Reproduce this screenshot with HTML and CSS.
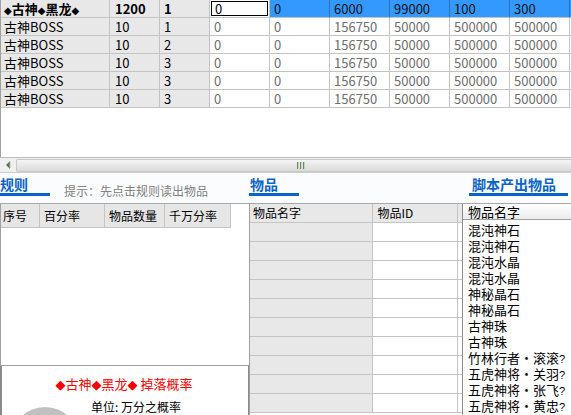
FILE: index.html
```html
<!DOCTYPE html>
<html>
<head>
<meta charset="utf-8">
<link rel="stylesheet" href="styles.css">
</head>
<body>
<div class="top">
  <div class="row sel">
    <div class="c fix c1"><span class="dm">◆</span>古神<span class="dm">◆</span>黑龙<span class="dm">◆</span></div>
    <div class="c fix c2">1200</div>
    <div class="c fix">1</div>
    <div class="c edit"><span class="input">0</span></div>
    <div class="c hl">0</div>
    <div class="c hl">6000</div>
    <div class="c hl">99000</div>
    <div class="c hl">100</div>
    <div class="c hl">300</div>
    <div class="c hl"></div>
  </div>
  <div class="row">
    <div class="c fix c1">古神BOSS</div><div class="c fix c2">10</div><div class="c fix">1</div>
    <div class="c">0</div><div class="c">0</div><div class="c">156750</div><div class="c">50000</div><div class="c">500000</div><div class="c">500000</div><div class="c"></div>
  </div>
  <div class="row">
    <div class="c fix c1">古神BOSS</div><div class="c fix c2">10</div><div class="c fix">2</div>
    <div class="c">0</div><div class="c">0</div><div class="c">156750</div><div class="c">50000</div><div class="c">500000</div><div class="c">500000</div><div class="c"></div>
  </div>
  <div class="row">
    <div class="c fix c1">古神BOSS</div><div class="c fix c2">10</div><div class="c fix">3</div>
    <div class="c">0</div><div class="c">0</div><div class="c">156750</div><div class="c">50000</div><div class="c">500000</div><div class="c">500000</div><div class="c"></div>
  </div>
  <div class="row">
    <div class="c fix c1">古神BOSS</div><div class="c fix c2">10</div><div class="c fix">3</div>
    <div class="c">0</div><div class="c">0</div><div class="c">156750</div><div class="c">50000</div><div class="c">500000</div><div class="c">500000</div><div class="c"></div>
  </div>
  <div class="row">
    <div class="c fix c1">古神BOSS</div><div class="c fix c2">10</div><div class="c fix">3</div>
    <div class="c">0</div><div class="c">0</div><div class="c">156750</div><div class="c">50000</div><div class="c">500000</div><div class="c">500000</div><div class="c"></div>
  </div>
</div>
<div class="hscroll">
  <div class="arrow"><svg width="6" height="8" viewBox="0 0 6 8"><path d="M5 0 L1 4 L5 8 Z" fill="#6a6a6a"/><path d="M5 1 L5 7" stroke="#8fd16a" stroke-width="1"/></svg></div>
  <div class="thumb"><div class="grip"><i></i><i></i><i></i></div></div>
</div>
<div class="tabs">
  <div class="tsec tsec1">
    <div class="tab tab1">规则</div>
    <div class="hint">提示：先点击规则读出物品</div>
  </div>
  <div class="tsec tsec2">
    <div class="tab tab2">物品</div>
  </div>
  <div class="tsec tsec3">
    <div class="tab tab3">脚本产出物品</div>
  </div>
</div>
<div class="panels">
  <div class="left">
    <div class="lup">
      <div class="lhead">
        <div class="h h1">序号</div><div class="h h2">百分率</div><div class="h h3">物品数量</div><div class="h h4">千万分率</div>
      </div>
    </div>
    <div class="ldown">
      <div class="rtitle"><span class="dm2">◆</span>古神<span class="dm2">◆</span>黑龙<span class="dm2">◆</span> 掉落概率</div>
      <div class="chartrow">
        <svg class="pie" width="68" height="68" viewBox="0 0 68 68"><circle cx="34" cy="34" r="34" fill="#c0c0c0"/></svg>
        <div class="unit">单位: 万分之概率</div>
      </div>
    </div>
  </div>
  <div class="mid">
    <div class="mrow mhead"><div class="m m1">物品名字</div><div class="m m2">物品ID</div><div class="m m3"></div></div>
    <div class="mrow"><div class="m m1"></div><div class="m m2"></div><div class="m m3"></div></div>
    <div class="mrow"><div class="m m1"></div><div class="m m2"></div><div class="m m3"></div></div>
    <div class="mrow"><div class="m m1"></div><div class="m m2"></div><div class="m m3"></div></div>
    <div class="mrow"><div class="m m1"></div><div class="m m2"></div><div class="m m3"></div></div>
    <div class="mrow"><div class="m m1"></div><div class="m m2"></div><div class="m m3"></div></div>
    <div class="mrow"><div class="m m1"></div><div class="m m2"></div><div class="m m3"></div></div>
    <div class="mrow"><div class="m m1"></div><div class="m m2"></div><div class="m m3"></div></div>
    <div class="mrow"><div class="m m1"></div><div class="m m2"></div><div class="m m3"></div></div>
    <div class="mrow"><div class="m m1"></div><div class="m m2"></div><div class="m m3"></div></div>
    <div class="mrow"><div class="m m1"></div><div class="m m2"></div><div class="m m3"></div></div>
  </div>
  <div class="right">
    <div class="rhead">物品名字</div>
    <ul class="list">
      <li>混沌神石</li>
      <li>混沌神石</li>
      <li>混沌水晶</li>
      <li>混沌水晶</li>
      <li>神秘晶石</li>
      <li>神秘晶石</li>
      <li>古神珠</li>
      <li>古神珠</li>
      <li>竹林行者・滚滚<span class="q">?</span></li>
      <li>五虎神将・关羽<span class="q">?</span></li>
      <li>五虎神将・张飞<span class="q">?</span></li>
      <li>五虎神将・黄忠<span class="q">?</span></li>
    </ul>
  </div>
</div>
</body>
</html>
```

FILE: styles.css
```css
* { box-sizing: border-box; margin: 0; padding: 0; }
html, body { width: 571px; height: 415px; overflow: hidden; }
body {
  background: #fbfcfe;
  font-family: "Noto Sans CJK SC", "Microsoft YaHei", sans-serif;
  font-size: 13px;
  color: #000;
}

/* top grid */
.top { height: 157px; background: #fff; border-left: 1px solid #a0a0a0; overflow: hidden; }
.row {
  display: grid;
  grid-template-columns: 109px 50px 50px 60px 60px 60px 60px 60px 60px 60px;
  height: 18px;
}
.c {
  border-right: 1px solid #c4c4c4;
  border-bottom: 1px solid #c4c4c4;
  padding-left: 4px;
  line-height: 17px;
  white-space: nowrap;
  overflow: hidden;
  color: #6e6e6e;
}
.fix { background: #e8e8e8; color: #000; }
.c1 { padding-left: 3px; }
.c2 { padding-left: 5px; }
.sel .fix { font-weight: bold; }
.sel .hl { background: #3399ff; color: #111; border-right-color: #2b72c0; }
.dm { font-family: "DejaVu Sans", sans-serif; font-size: 10px; font-weight: bold; }
.edit { padding: 1px 1px 1px 1px; }
.input {
  display: block;
  height: 15px;
  border: 1px solid #000;
  background: #fff;
  color: #000;
  padding-left: 3px;
  line-height: 13px;
}

/* horizontal scrollbar */
.hscroll {
  height: 16px;
  border-top: 1px solid #bcbcbc;
  border-bottom: 1px solid #cfcfcf;
  background: #f0f0f0;
  display: flex;
  align-items: center;
}
.arrow { width: 16px; height: 14px; display: flex; align-items: center; justify-content: center; }
.thumb {
  flex: 1;
  height: 13px;
  border: 1px solid #c8c8c8;
  border-right: none;
  border-radius: 2px 0 0 2px;
  background: linear-gradient(#f5f5f5, #dadada);
  display: flex;
  align-items: center;
  padding-left: 280px;
}
.grip { display: flex; gap: 2px; }
.grip i { display: block; width: 1px; height: 7px; background: #7a7a7a; box-shadow: 1px 0 0 #b8e3a0; }

/* tabs */
.tabs { height: 31px; border-bottom: 1px solid #a8a8a8; display: flex; align-items: flex-start; }
.tsec { display: flex; align-items: flex-start; }
.tsec1 { width: 249px; }
.tsec2 { width: 220px; }
.tsec3 { width: 102px; }
.tab {
  margin-top: 3px;
  height: 20px;
  border-bottom: 3px solid #0a64c8;
  color: #0a64c8;
  font-weight: bold;
  font-size: 14px;
  line-height: 17px;
  white-space: nowrap;
}
.tab1 { width: 50px; }
.tab2 { width: 50px; padding-left: 1px; }
.tab3 { width: 99px; padding-left: 3px; }
.hint { margin-left: 14px; margin-top: 11px; font-size: 12px; line-height: 14px; color: #808080; white-space: nowrap; }

/* bottom panels */
.panels { display: flex; height: 211px; }
.left { width: 249px; display: flex; flex-direction: column; }
.lup { height: 162px; background: #fff; border-left: 1px solid #a0a0a0; border-bottom: 1px solid #a0a0a0; }
.lhead { display: flex; height: 24px; }
.h {
  background: #e6e6e6;
  border-right: 1px solid #c4c4c4;
  border-bottom: 1px solid #c4c4c4;
  font-size: 12px;
  line-height: 23px;
  padding-left: 4px;
  white-space: nowrap;
}
.h1 { width: 39px; padding-left: 2px; }
.h2 { width: 65px; }
.h3 { width: 60px; }
.h4 { width: 66px; }
.ldown { flex: 1; background: #fff; border-left: 2px solid #8a8a8a; border-right: 1px solid #8a8a8a; overflow: hidden; }
.rtitle { text-align: center; color: #ff0000; font-size: 13px; line-height: 18px; margin-top: 9px; padding-right: 2px; white-space: nowrap; }
.dm2 { font-family: "DejaVu Sans", sans-serif; font-size: 13px; }
.chartrow { display: flex; align-items: flex-start; margin-top: 5px; }
.pie { margin-left: 9px; margin-top: 8px; flex: none; }
.unit { margin-left: 12px; font-size: 12px; line-height: 16px; white-space: nowrap; }

.mid { width: 213px; border-left: 1px solid #a0a0a0; background: #fff; overflow: hidden; }
.mrow { display: flex; height: 19px; }
.m { border-right: 1px solid #c4c4c4; border-bottom: 1px solid #c4c4c4; font-size: 12px; line-height: 18px; white-space: nowrap; }
.m1 { width: 124px; background: #e8e8e8; padding-left: 3px; }
.m2 { width: 85px; padding-left: 4px; }
.m3 { width: 4px; border-right: none; }
.mhead .m { background: #e8e8e8; }

.right { flex: 1; background: #fff; border-left: 1px solid #8a8a8a; overflow: hidden; }
.rhead {
  height: 16px;
  background: linear-gradient(#ffffff, #ececec);
  border-bottom: 1px solid #a0a0a0;
  padding-left: 5px;
  font-size: 13px;
  line-height: 15px;
  white-space: nowrap;
}
.list { list-style: none; padding-top: 2px; }
.list li { padding-left: 5px; font-size: 13px; line-height: 16px; height: 16px; white-space: nowrap; }
.q { font-family: "Liberation Sans", sans-serif; font-size: 11px; }
```
